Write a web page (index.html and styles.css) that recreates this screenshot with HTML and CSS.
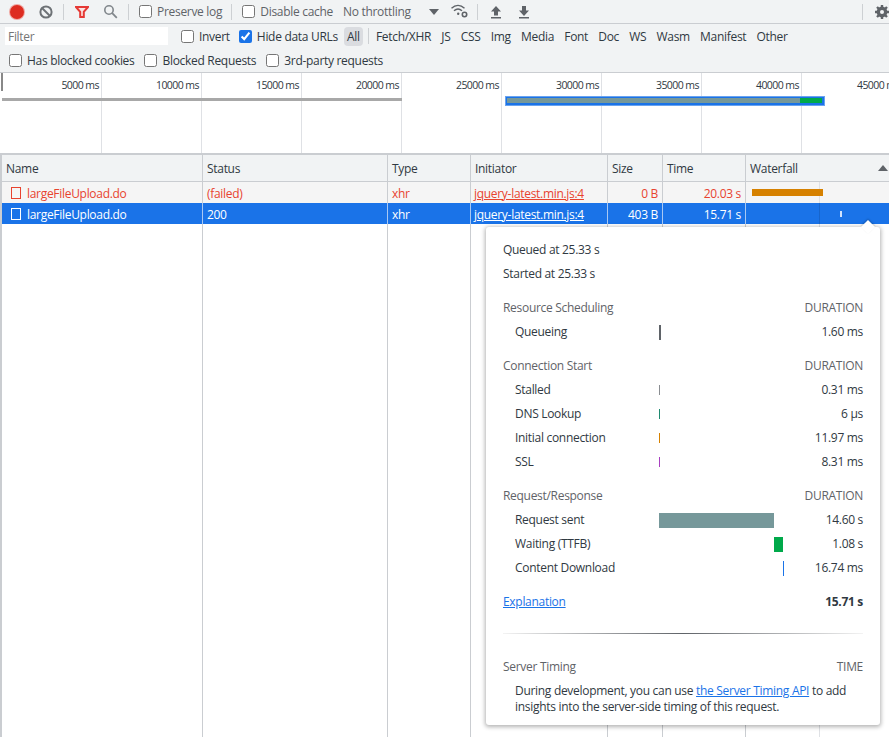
FILE: index.html
```html
<!DOCTYPE html>
<html lang="en">
<head>
<meta charset="utf-8">
<title>Network</title>
<link rel="stylesheet" href="styles.css">
</head>
<body>
<div class="devtools">
  <div class="toolbar">
    <span class="record"></span>
    <svg class="ic ic-block" width="16" height="16" viewBox="0 0 16 16"><circle cx="8" cy="8" r="5.6" fill="none" stroke="#6e7276" stroke-width="2"/><path d="M4 4l8 8" stroke="#6e7276" stroke-width="2"/></svg>
    <i class="sep sep-a"></i>
    <svg class="ic ic-filter" width="14" height="12" viewBox="0 0 14 12"><path d="M1 1h12L8.800 5.800V11H5.200V5.800z" fill="#fbe4e2" stroke="#e53935" stroke-width="2" stroke-linejoin="miter"/></svg>
    <svg class="ic ic-search" width="15" height="15" viewBox="0 0 15 15"><circle cx="6" cy="6" r="4.2" fill="none" stroke="#80868b" stroke-width="1.6"/><path d="M9.2 9.2l4.6 4.6" stroke="#80868b" stroke-width="1.8"/></svg>
    <i class="sep sep-b"></i>
    <label class="check tb-preserve"><input type="checkbox"><span>Preserve log</span></label>
    <i class="sep sep-c"></i>
    <label class="check tb-cache"><input type="checkbox"><span>Disable cache</span></label>
    <span class="throttle">No throttling</span>
    <span class="caret"></span>
    <svg class="ic ic-wifi" width="19" height="15" viewBox="0 0 19 15"><path d="M1.5 4.2C5.5.6 10.500.6 14.500 4.200M4 6.800c2.600-2.300 5.400-2.300 8 0" fill="none" stroke="#5f6368" stroke-width="1.400"/><circle cx="8.200" cy="9.700" r="1.200" fill="#5f6368"/><circle cx="14.500" cy="10.500" r="2.200" fill="none" stroke="#5f6368" stroke-width="1.600"/></svg>
    <i class="sep sep-d"></i>
    <svg class="ic ic-up" width="12" height="14" viewBox="0 0 12 14"><path d="M6 1l5 5.500H8v4H4v-4H1zM1 12h10v1.500H1z" fill="#5f6368"/></svg>
    <svg class="ic ic-down" width="12" height="14" viewBox="0 0 12 14"><path d="M4 1h4v4.500h3L6 11 1 5.500h3zM1 12h10v1.500H1z" fill="#5f6368"/></svg>
    <i class="sep sep-e"></i>
    <svg class="ic ic-gear" width="14" height="14" viewBox="0 0 14 14"><circle cx="7" cy="7" r="3.900" fill="none" stroke="#5f6368" stroke-width="3"/><path d="M7 0v14M0 7h14M2 2l10 10M12 2L2 12" stroke="#5f6368" stroke-width="2.400"/><circle cx="7" cy="7" r="2" fill="#f1f3f4"/></svg>
  </div>

  <div class="filterbar">
    <div class="filter-row">
      <input class="filter-input" type="text" placeholder="Filter">
      <label class="check fb-invert"><input type="checkbox"><span>Invert</span></label>
      <label class="check fb-hide"><input type="checkbox" checked><span>Hide data URLs</span></label>
      <span class="pill">All</span>
      <i class="sep sep-f"></i>
      <div class="types">
        <span>Fetch/XHR</span><span>JS</span><span>CSS</span><span>Img</span><span>Media</span><span>Font</span><span>Doc</span><span>WS</span><span>Wasm</span><span>Manifest</span><span>Other</span>
      </div>
    </div>
    <div class="filter-row second">
      <label class="check"><input type="checkbox"><span>Has blocked cookies</span></label>
      <label class="check"><input type="checkbox"><span>Blocked Requests</span></label>
      <label class="check"><input type="checkbox"><span>3rd-party requests</span></label>
    </div>
  </div>

  <div class="overview">
    <div class="tick">5000 ms</div><div class="tick">10000 ms</div><div class="tick">15000 ms</div><div class="tick">20000 ms</div><div class="tick">25000 ms</div><div class="tick">30000 ms</div><div class="tick">35000 ms</div><div class="tick">40000 ms</div><div class="tick tick-last">45000 ms</div>
    <span class="ov-start"></span>
    <span class="ov-failed"></span>
    <div class="ov-request"><span class="ov-sent"></span><span class="ov-wait"></span></div>
  </div>

  <div class="table">
    <div class="cell head">Name</div><div class="cell head">Status</div><div class="cell head">Type</div><div class="cell head">Initiator</div><div class="cell head">Size</div><div class="cell head">Time</div><div class="cell head last">Waterfall<span class="sort"></span></div>

    <div class="cell failed name"><i class="doc"></i>largeFileUpload.do</div><div class="cell failed">(failed)</div><div class="cell failed">xhr</div><div class="cell failed init"><u>jquery-latest.min.js:4</u></div><div class="cell failed num">0 B</div><div class="cell failed num">20.03 s</div><div class="cell failed last wf"><span class="wf-line"></span><span class="wf-orange"></span></div>

    <div class="cell sel name"><i class="doc"></i>largeFileUpload.do</div><div class="cell sel">200</div><div class="cell sel">xhr</div><div class="cell sel init"><u>jquery-latest.min.js:4</u></div><div class="cell sel num">403 B</div><div class="cell sel num">15.71 s</div><div class="cell sel last wf"><span class="wf-line dark"></span><span class="wf-tick"></span></div>

    <div class="cell"></div><div class="cell"></div><div class="cell"></div><div class="cell"></div><div class="cell"></div><div class="cell"></div><div class="cell last wf"><span class="wf-line"></span></div>
  </div>

  <div class="popover">
    <span class="pop-arrow"></span>
    <div class="pop-row"><span>Queued at 25.33 s</span></div>
    <div class="pop-row"><span>Started at 25.33 s</span></div>

    <div class="pop-row title gap"><span>Resource Scheduling</span><span>DURATION</span></div>
    <div class="pop-row item"><span class="lbl">Queueing</span><span class="track"><b class="bar b-queue" style="margin-left:0;width:2px"></b></span><span class="val">1.60 ms</span></div>

    <div class="pop-row title gap"><span>Connection Start</span><span>DURATION</span></div>
    <div class="pop-row item"><span class="lbl">Stalled</span><span class="track"><b class="bar thin b-stall" style="margin-left:0;width:1px"></b></span><span class="val">0.31 ms</span></div>
    <div class="pop-row item"><span class="lbl">DNS Lookup</span><span class="track"><b class="bar thin b-dns" style="margin-left:0;width:1px"></b></span><span class="val">6 µs</span></div>
    <div class="pop-row item"><span class="lbl">Initial connection</span><span class="track"><b class="bar thin b-conn" style="margin-left:0;width:1px"></b></span><span class="val">11.97 ms</span></div>
    <div class="pop-row item"><span class="lbl">SSL</span><span class="track"><b class="bar thin b-ssl" style="margin-left:0;width:1px"></b></span><span class="val">8.31 ms</span></div>

    <div class="pop-row title gap"><span>Request/Response</span><span>DURATION</span></div>
    <div class="pop-row item"><span class="lbl">Request sent</span><span class="track"><b class="bar b-sent" style="margin-left:0;width:115px"></b></span><span class="val">14.60 s</span></div>
    <div class="pop-row item"><span class="lbl">Waiting (TTFB)</span><span class="track"><b class="bar b-wait" style="margin-left:115px;width:9px"></b></span><span class="val">1.08 s</span></div>
    <div class="pop-row item"><span class="lbl">Content Download</span><span class="track"><b class="bar b-down" style="margin-left:124px;width:1px"></b></span><span class="val">16.74 ms</span></div>

    <div class="pop-row total gap"><a href="#">Explanation</a><strong>15.71 s</strong></div>
    <div class="divider"></div>
    <div class="pop-row title"><span>Server Timing</span><span>TIME</span></div>
    <p class="note">During development, you can use <a href="#">the Server Timing API</a> to add insights into the server-side timing of this request.</p>
  </div>
</div>
</body>
</html>
```
FILE: styles.css
```css
* { box-sizing: border-box; }
html, body { margin: 0; height: 100%; }
body { overflow: hidden; background: #fff; }
.devtools {
  position: relative; width: 889px; height: 737px; overflow: hidden;
  display: flex; flex-direction: column;
  font: 12px/16px "Open Sans", "Noto Sans", sans-serif;
  letter-spacing: -0.3px;
  color: #303942;
}
.toolbar {
  height: 24px; flex: none; display: flex; align-items: center;
  background: #f1f3f4; border-bottom: 1px solid #cacdd1;
  color: #5f6368;
}
.ic { flex: none; display: block; }
.sep { display: block; flex: none; width: 1px; height: 16px; background: #cdd0d3; }
.record { flex: none; width: 14px; height: 14px; border-radius: 50%; background: #dd2c20; margin-left: 10px; box-shadow: 0 0 0 1px #f0a8a2; }
.ic-block { margin-left: 14px; }
.sep-a { margin-left: 9px; }
.ic-filter { margin-left: 11px; }
.ic-search { margin-left: 14px; }
.sep-b { margin-left: 10px; }
.tb-preserve { margin-left: 10px; }
.sep-c { margin-left: 9px; }
.tb-cache { margin-left: 10px; }
.throttle { margin-left: 10px; width: 69px; white-space: nowrap; }
.caret { margin-left: 17px; width: 0; height: 0; border: 5px solid transparent; border-top: 6px solid #5f6368; border-bottom: 0; }
.ic-wifi { margin-left: 11px; }
.sep-d { margin-left: 8px; }
.ic-up { margin-left: 12px; }
.ic-down { margin-left: 16px; }
.sep-e { margin-left: 332px; }
.ic-gear { margin-left: 12px; }

.check { display: flex; align-items: center; gap: 5px; white-space: nowrap; color: #5f6368; }
.check input { margin: 0; width: 13px; height: 13px; accent-color: #1a73e8; flex: none; }

.filterbar {
  height: 49px; flex: none; background: #f1f3f4; border-bottom: 1px solid #cacdd1;
  display: flex; flex-direction: column;
}
.filter-row { display: flex; align-items: center; height: 24px; padding-left: 5px; }
.filter-row .check { color: #303942; }
.filter-row .check span, .types span { position: relative; top: 1px; }
.filter-row.second { padding-left: 9px; gap: 10px; }
.filter-input {
  width: 163px; height: 18px; border: 0; background: #fff; padding: 1px 3px 0; outline: 0;
  font: inherit; letter-spacing: inherit; color: #303942;
}
.filter-input::placeholder { color: #757575; opacity: 1; }
.fb-invert { margin-left: 13px; }
.fb-hide { margin-left: 9px; }
.pill { margin-left: 6px; height: 19px; width: 19px; line-height: 20px; text-align: center; border-radius: 4px; background: #dadce0; }
.sep-f { margin-left: 5px; }
.types { display: flex; gap: 10.2px; margin-left: 7px; white-space: nowrap; }

.overview {
  position: relative; height: 82px; flex: none; display: flex; padding-left: 2px;
  border-bottom: 2px solid #cacdd1; overflow: hidden;
  font-size: 10.5px; letter-spacing: -0.55px;
}
.tick {
  flex: none; width: 100px; text-align: right; padding: 4px 2px 0 0;
  border-right: 1px solid #dfe1e5; color: #303942; white-space: nowrap;
}
.tick-last { border-right: 0; }
.ov-start { position: absolute; left: 1px; top: 0; width: 2px; height: 18px; background: #888; }
.ov-failed { position: absolute; left: 2px; top: 25px; width: 400px; height: 3px; background: #a8a8a8; }
.ov-request {
  position: absolute; left: 505px; top: 23px; width: 320px; height: 10px;
  background: #1a73e8; border: 1px solid #6aa3ee; padding: 1px 1px 2px; display: flex;
}
.ov-sent { display: block; width: 293px; background: #76989a; }
.ov-wait { display: block; width: 22px; background: #00a94a; }

.table {
  flex: 1; min-height: 0; display: grid; padding-left: 2px; background: #fff;
  grid-template-columns: 201px 185px 83px 137px 55px 83px 143px;
  grid-template-rows: 27px 21px 21px 1fr;
  box-shadow: inset 2px 0 0 #cacdd1;
}
.cell {
  padding: 0 4px; border-right: 1px solid #cacdd1; white-space: nowrap;
  display: flex; align-items: center; position: relative; min-width: 0;
}
.cell.last { border-right: 0; }
.head { background: #f1f3f4; border-bottom: 1px solid #cacdd1; color: #303942; height: 27px; padding-top: 2px; }
.sort { position: absolute; right: 1px; top: 10px; width: 0; height: 0; border: 5px solid transparent; border-bottom: 6px solid #5f6368; border-top: 0; }
.failed, .sel { padding-top: 2px; }
.failed { background: #f5f5f5; color: #e8432f; }
.sel { background: #1a73e8; color: #fff; }
.sel.cell { border-right-color: #a9c8f3; }
.num { justify-content: flex-end; }
.init { padding-left: 3px; }
.doc { display: block; flex: none; width: 10px; height: 12px; border: 1px solid currentColor; margin: -2px 6px 0 5px; }
.wf-line { position: absolute; left: 73px; top: 0; bottom: 0; width: 1px; background: #dfe1e5; }
.wf-line.dark { background: #1765cc; }
.wf-orange { position: absolute; left: 6px; top: 7px; width: 71px; height: 7px; background: #d68100; }
.wf-tick { position: absolute; left: 94px; top: 8px; width: 2px; height: 6px; background: #d2e3fc; }

.popover {
  position: absolute; left: 486px; top: 227px; width: 394px; height: 498px;
  background: #fff; border-radius: 3px; padding: 11px 17px 0;
  box-shadow: 0 1px 4px 1px rgba(0,0,0,.3);
}
.pop-arrow {
  position: absolute; left: 377px; top: -5px; width: 10px; height: 10px; background: #fff;
  transform: rotate(45deg); box-shadow: -1px -1px 2px rgba(0,0,0,.2);
}
.pop-row { position: relative; height: 24px; display: flex; justify-content: space-between; align-items: center; white-space: nowrap; }
.pop-row.gap { margin-top: 10px; }
.title { color: #5f6368; }
.item { padding-left: 12px; justify-content: flex-start; }
.lbl { width: 144px; flex: none; }
.track { width: 125px; flex: none; height: 15px; display: block; }
.val { flex: 1; text-align: right; }
.bar { display: block; height: 15px; }
.bar.thin { height: 10px; margin-top: 2px; }
.b-queue { background: #5f6368; }
.b-stall { background: #8a8d91; }
.b-dns { background: #1f8a70; }
.b-conn { background: #d68100; }
.b-ssl { background: #a83fc0; }
.b-sent { background: #76989a; }
.b-wait { background: #00a94a; }
.b-down { background: #1a73e8; }
.total strong { font-weight: 700; }
a { color: #1a73e8; text-decoration: underline; }
.divider {
  height: 1px; margin: 19px 0 21px;
  background: linear-gradient(90deg, #f3f3f3, #5f6368 50%, #f3f3f3);
}
.note { margin: 0; padding: 4px 0 0 12px; line-height: 16px; }
```
